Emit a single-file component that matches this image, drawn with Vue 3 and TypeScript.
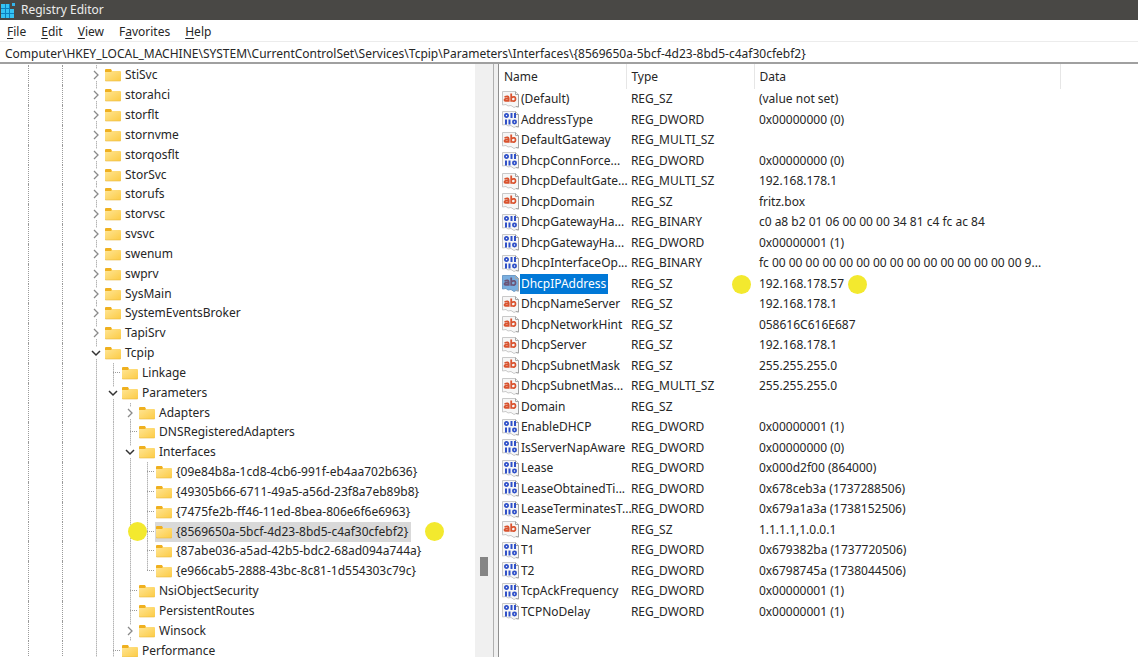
<script setup lang="ts">
interface TreeNode {
  label: string
  level: number
  state: 'closed' | 'open' | 'leaf'
  last?: boolean
  selected?: boolean
}
interface RegistryValue {
  name: string
  type: string
  data: string
  selected?: boolean
}

const menus = [
  { pre: '', key: 'F', post: 'ile' },
  { pre: '', key: 'E', post: 'dit' },
  { pre: '', key: 'V', post: 'iew' },
  { pre: 'F', key: 'a', post: 'vorites' },
  { pre: '', key: 'H', post: 'elp' },
]

const path =
  'Computer\\HKEY_LOCAL_MACHINE\\SYSTEM\\CurrentControlSet\\Services\\Tcpip\\Parameters\\Interfaces\\{8569650a-5bcf-4d23-8bd5-c4af30cfebf2}'

const services = [
  'StiSvc', 'storahci', 'storflt', 'stornvme', 'storqosflt', 'StorSvc', 'storufs',
  'storvsc', 'svsvc', 'swenum', 'swprv', 'SysMain', 'SystemEventsBroker', 'TapiSrv',
]

const nodes: TreeNode[] = [
  ...services.map((label): TreeNode => ({ label, level: 0, state: 'closed' })),
  { label: 'Tcpip', level: 0, state: 'open' },
  { label: 'Linkage', level: 1, state: 'leaf' },
  { label: 'Parameters', level: 1, state: 'open' },
  { label: 'Adapters', level: 2, state: 'closed' },
  { label: 'DNSRegisteredAdapters', level: 2, state: 'leaf' },
  { label: 'Interfaces', level: 2, state: 'open' },
  { label: '{09e84b8a-1cd8-4cb6-991f-eb4aa702b636}', level: 3, state: 'leaf' },
  { label: '{49305b66-6711-49a5-a56d-23f8a7eb89b8}', level: 3, state: 'leaf' },
  { label: '{7475fe2b-ff46-11ed-8bea-806e6f6e6963}', level: 3, state: 'leaf' },
  { label: '{8569650a-5bcf-4d23-8bd5-c4af30cfebf2}', level: 3, state: 'leaf', selected: true },
  { label: '{87abe036-a5ad-42b5-bdc2-68ad094a744a}', level: 3, state: 'leaf' },
  { label: '{e966cab5-2888-43bc-8c81-1d554303c79c}', level: 3, state: 'leaf', last: true },
  { label: 'NsiObjectSecurity', level: 2, state: 'leaf' },
  { label: 'PersistentRoutes', level: 2, state: 'leaf' },
  { label: 'Winsock', level: 2, state: 'closed', last: true },
  { label: 'Performance', level: 1, state: 'leaf' },
]

const values: RegistryValue[] = [
  { name: '(Default)', type: 'REG_SZ', data: '(value not set)' },
  { name: 'AddressType', type: 'REG_DWORD', data: '0x00000000 (0)' },
  { name: 'DefaultGateway', type: 'REG_MULTI_SZ', data: '' },
  { name: 'DhcpConnForce...', type: 'REG_DWORD', data: '0x00000000 (0)' },
  { name: 'DhcpDefaultGate...', type: 'REG_MULTI_SZ', data: '192.168.178.1' },
  { name: 'DhcpDomain', type: 'REG_SZ', data: 'fritz.box' },
  { name: 'DhcpGatewayHa...', type: 'REG_BINARY', data: 'c0 a8 b2 01 06 00 00 00 34 81 c4 fc ac 84' },
  { name: 'DhcpGatewayHa...', type: 'REG_DWORD', data: '0x00000001 (1)' },
  { name: 'DhcpInterfaceOp...', type: 'REG_BINARY', data: 'fc 00 00 00 00 00 00 00 00 00 00 00 00 00 00 00 9...' },
  { name: 'DhcpIPAddress', type: 'REG_SZ', data: '192.168.178.57', selected: true },
  { name: 'DhcpNameServer', type: 'REG_SZ', data: '192.168.178.1' },
  { name: 'DhcpNetworkHint', type: 'REG_SZ', data: '058616C616E687' },
  { name: 'DhcpServer', type: 'REG_SZ', data: '192.168.178.1' },
  { name: 'DhcpSubnetMask', type: 'REG_SZ', data: '255.255.255.0' },
  { name: 'DhcpSubnetMas...', type: 'REG_MULTI_SZ', data: '255.255.255.0' },
  { name: 'Domain', type: 'REG_SZ', data: '' },
  { name: 'EnableDHCP', type: 'REG_DWORD', data: '0x00000001 (1)' },
  { name: 'IsServerNapAware', type: 'REG_DWORD', data: '0x00000000 (0)' },
  { name: 'Lease', type: 'REG_DWORD', data: '0x000d2f00 (864000)' },
  { name: 'LeaseObtainedTi...', type: 'REG_DWORD', data: '0x678ceb3a (1737288506)' },
  { name: 'LeaseTerminatesT...', type: 'REG_DWORD', data: '0x679a1a3a (1738152506)' },
  { name: 'NameServer', type: 'REG_SZ', data: '1.1.1.1,1.0.0.1' },
  { name: 'T1', type: 'REG_DWORD', data: '0x679382ba (1737720506)' },
  { name: 'T2', type: 'REG_DWORD', data: '0x6798745a (1738044506)' },
  { name: 'TcpAckFrequency', type: 'REG_DWORD', data: '0x00000001 (1)' },
  { name: 'TCPNoDelay', type: 'REG_DWORD', data: '0x00000001 (1)' },
]

const isText = (v: RegistryValue) => v.type.endsWith('SZ')

/* One full-height guide line for each visible level above the node. */
const ancestors = (n: TreeNode) => Array.from({ length: n.level }, (_, i) => i)
</script>

<template>
  <div class="window">
    <header class="title">
      <svg width="16" height="18" viewBox="0 0 16 18" aria-hidden="true">
        <rect x="1" y="3" width="13" height="14" fill="#0c7fbe" />
        <g fill="#35c3f3">
          <rect x="1" y="3" width="4" height="4" />
          <rect x="6" y="3" width="3" height="4" />
          <rect x="1" y="8" width="4" height="4" />
          <rect x="6" y="8" width="3" height="4" />
          <rect x="10" y="8" width="4" height="4" />
          <rect x="1" y="13" width="4" height="4" />
          <rect x="6" y="13" width="3" height="4" />
          <rect x="10" y="13" width="4" height="4" />
        </g>
        <rect x="10" y="2" width="5" height="6" fill="#494845" />
        <rect x="12" y="2" width="3" height="3" fill="#35b5ea" />
      </svg>
      <span>Registry Editor</span>
    </header>

    <nav class="menu">
      <button v-for="m in menus" :key="m.key" type="button">{{ m.pre }}<u>{{ m.key }}</u>{{ m.post }}</button>
    </nav>

    <input class="address" type="text" aria-label="Registry path" :value="path" />

    <main class="panes">
      <section class="tree">
        <ul>
          <li v-for="n in nodes" :key="n.label">
            <i class="outer first"></i>
            <i class="outer"></i>
            <i v-for="a in ancestors(n)" :key="a" class="guide full"></i>
            <span class="guide" :class="[n.state, { last: n.last }]">
              <svg v-if="n.state === 'closed'" width="8" height="12" viewBox="0 0 8 12">
                <path d="M2 2l4 4-4 4" fill="none" stroke="#8a8a8a" stroke-width="1.3" />
              </svg>
              <svg v-else-if="n.state === 'open'" width="10" height="12" viewBox="0 0 10 12">
                <path d="M1 4l4 4 4-4" fill="none" stroke="#333" stroke-width="1.5" />
              </svg>
            </span>
            <span class="node" :class="{ selected: n.selected }">
              <svg width="16" height="14" viewBox="0 0 16 14">
                <path d="M0 2q0-1 1-1h5l1 2v3H0z" fill="#efb01f" />
                <path d="M0 4h6l1-1h8q1 0 1 1v8q0 1-1 1H1q-1 0-1-1z" fill="url(#folder)" />
                <path d="M0 12q0 1 1 1h14q1 0 1-1" fill="none" stroke="#eab942" stroke-width="0.6" />
              </svg>
              <span>{{ n.label }}</span>
            </span>
            <template v-if="n.selected">
              <b class="dot before"></b>
              <b class="dot after"></b>
            </template>
          </li>
        </ul>
        <div class="scrollbar"><div class="thumb"></div></div>
      </section>

      <section class="list">
        <table>
          <colgroup>
            <col class="c-name" />
            <col class="c-type" />
            <col class="c-data" />
            <col />
          </colgroup>
          <thead>
            <tr><th>Name</th><th>Type</th><th>Data</th><td></td></tr>
          </thead>
          <tbody>
            <tr v-for="(v, i) in values" :key="i" :class="{ selected: v.selected }">
              <td>
                <div class="name">
                  <svg width="17" height="17" viewBox="0 0 17 17" :class="isText(v) ? 'text' : 'binary'">
                    <path class="sheet" d="M.5.5h13l3 3v12.500l-2.500-.5-2 1-3-2-3 .5-2-1.500-3.500.5z" />
                    <path class="fold" d="M13.500.5v3h3v12.500l-2.500-.5" />
                    <g v-if="isText(v)" class="glyph" stroke-width="1.800">
                      <path d="M2.500 6q4.200-1.500 4.200 1v3.800M6.700 7.600q-4.200-.3-4.200 1.400t4.200.4M9.200 2.500v8.200M9.200 6.600q4.300-2 4.300 1.300t-4.300 1.600" />
                    </g>
                    <g v-else class="glyph" stroke-width="1.800">
                      <rect x="2.900" y="2.900" width="3.200" height="3.200" rx="1.500" />
                      <path d="M9.500 2v5M13 2v5M4 8.500v5M7.500 8.500v5" stroke-width="2" />
                      <rect x="10.900" y="9.400" width="3.200" height="3.200" rx="1.500" />
                    </g>
                  </svg>
                  <span>{{ v.name }}</span>
                </div>
              </td>
              <td>{{ v.type }}</td>
              <td>
                <span class="data">{{ v.data }}<template v-if="v.selected"><b class="dot before"></b><b class="dot after"></b></template></span>
              </td>
              <td></td>
            </tr>
          </tbody>
        </table>
      </section>
    </main>

    <svg class="defs" width="0" height="0" aria-hidden="true">
      <defs>
        <linearGradient id="folder" x1="0" y1="0" x2="1" y2="1">
          <stop offset="0" stop-color="#ffe593" />
          <stop offset="1" stop-color="#fccb45" />
        </linearGradient>
      </defs>
    </svg>
  </div>
</template>

<style>
body {
  margin: 0;
  overflow: hidden;
}
</style>

<style scoped>
.window {
  display: flex;
  flex-direction: column;
  height: 100vh;
  overflow: hidden;
  background: #fff;
  color: #262626;
  font: 12px/20px "Noto Sans", "Open Sans", sans-serif;
}
.title {
  display: flex;
  align-items: center;
  gap: 5px;
  flex: none;
  height: 20px;
  background: #494845;
  color: #ececec;
  line-height: 18px;
}
.menu {
  display: flex;
  gap: 15px;
  flex: none;
  height: 19px;
  padding: 2px 7px 0;
  border-bottom: 1px solid #ececec;
}
.menu button {
  padding: 0;
  border: 0;
  background: none;
  color: inherit;
  font: inherit;
  line-height: 20px;
}
.menu u {
  text-underline-offset: 2px;
}
.address {
  flex: none;
  box-sizing: border-box;
  width: 100%;
  height: 22px;
  padding: 2px 5px 0;
  border: 0;
  border-bottom: 2px solid #a0a0a0;
  outline: 0;
  background: #fff;
  color: inherit;
  font: inherit;
}
.panes {
  display: flex;
  flex: 1;
  min-height: 0;
  background: #f0f0f0;
}
.tree {
  display: flex;
  flex: none;
  box-sizing: border-box;
  width: 43.400%;
  border-right: 1px solid #b0b0b0;
}
ul {
  flex: 1;
  min-width: 0;
  margin: 0;
  padding: 1px 0 0;
  list-style: none;
  overflow: hidden;
  background: #fff;
}
li {
  display: flex;
  height: 20px;
  white-space: nowrap;
}
li:nth-child(6n) {
  height: 19px;
}
.outer {
  box-sizing: border-box;
  flex: none;
  width: 34px;
  border-left: 1px dotted #9a9a9a;
}
.outer.first {
  margin-left: 28px;
}
.guide {
  position: relative;
  box-sizing: border-box;
  flex: none;
  width: 17px;
  background: repeating-linear-gradient(#b4b4b4 0 1px, #dcdcdc 1px 2px) 0 0 / 1px 100% no-repeat;
}
.guide svg {
  position: absolute;
  top: 50%;
  left: 0;
  background: #fff;
  transform: translate(-50%, -50%);
}
.leaf::after {
  content: "";
  position: absolute;
  top: 9px;
  left: 0;
  width: 7px;
  border-top: 1px dotted #9a9a9a;
}
.leaf.last {
  background-size: 1px 50%;
}
.node {
  display: flex;
  align-items: center;
  gap: 4px;
  height: 20px;
  margin-left: -9px;
  padding: 0 3px 0 1px;
}
.node.selected {
  background: #d9d9d9;
}
.scrollbar {
  display: flex;
  flex-direction: column;
  align-items: center;
  flex: none;
  width: 18px;
}
.thumb {
  width: 8px;
  height: 19px;
  margin-top: 493px;
  background: #858585;
}
.list {
  flex: 1;
  min-width: 0;
  margin-left: 4px;
  border-left: 1px solid #8f8f8f;
  background: #fff;
}
table {
  width: 100%;
  border-collapse: collapse;
  table-layout: fixed;
}
.c-name { width: 128px; }
.c-type { width: 128px; }
.c-data { width: 306px; }
th,
td {
  padding: 0 0 0 4px;
  font-weight: 400;
  text-align: left;
  white-space: nowrap;
}
th:first-child {
  padding-left: 5px;
}
tbody td:first-child {
  padding-left: 3px;
}
thead tr {
  height: 25px;
}
th {
  border-right: 1px solid #e6e6e6;
}
tbody tr {
  height: 20px;
}
tbody tr:nth-child(even) {
  height: 21px;
}
.name {
  display: flex;
  align-items: center;
  gap: 1px;
}
.name svg {
  flex: none;
}
.name span {
  padding: 0 2px 0 1px;
}
.sheet {
  fill: #f6f6f6;
  stroke: #c9c9c9;
}
.fold {
  fill: none;
  stroke: #a5a5a5;
}
.glyph {
  fill: none;
}
.text .glyph {
  stroke: #d9532f;
}
.binary .glyph {
  stroke: #2f50c8;
}
.selected .name span {
  background: #0078d7;
  color: #fff;
}
.selected .sheet {
  fill: #7aafe0;
  stroke: #6f9cc8;
}
.selected .text .glyph {
  stroke: #6b5578;
}
.data,
li {
  position: relative;
}
.dot {
  width: 19px;
  height: 19px;
  border-radius: 50%;
  background: #f3e92e;
}
.data .dot {
  position: absolute;
  top: 0;
}
.data .before { right: calc(100% + 8px); }
.data .after { left: calc(100% + 4px); }
li .dot.before {
  position: absolute;
  left: 128px;
}
li .dot.after {
  margin-left: 14px;
}
.defs {
  position: absolute;
}
</style>
